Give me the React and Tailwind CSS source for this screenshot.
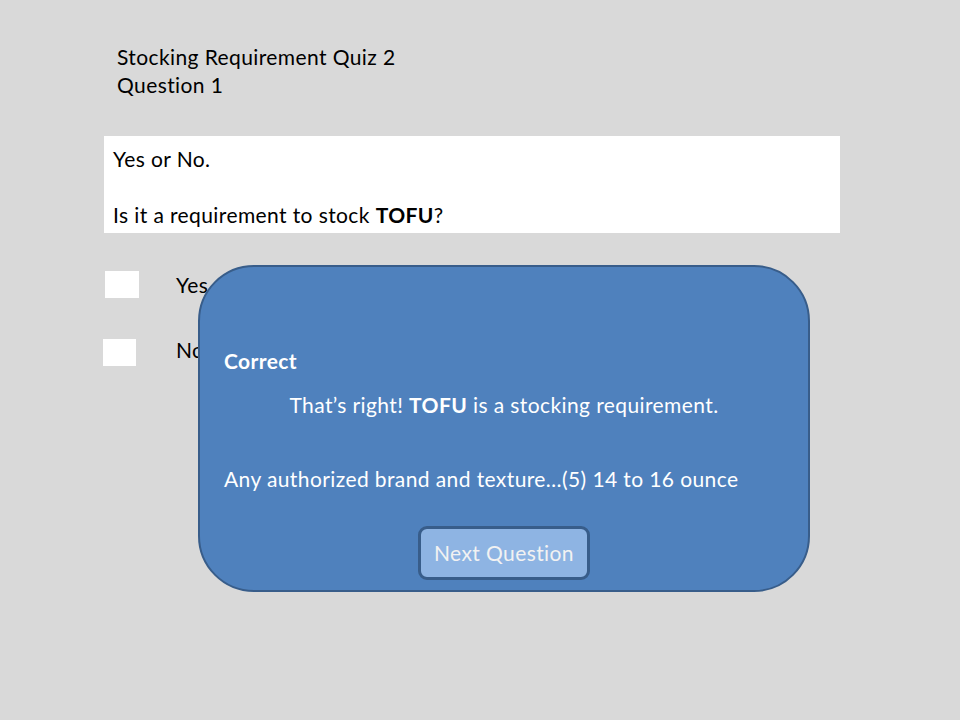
export default function App() {
  return (
    <div
      className="relative w-[960px] h-[720px] bg-[#d9d9d9] text-black overflow-hidden text-[21px] tracking-[0.4px]"
      style={{ fontFamily: "Lato, 'Open Sans', sans-serif" }}
    >
      <div className="flex flex-col pt-[43px] pl-[117px] leading-[28px]">
        <div>Stocking Requirement Quiz 2</div>
        <div>Question 1</div>
      </div>
      <div className="mt-[37px] ml-[104px] w-[736px] h-[97px] bg-white pl-[9px] pt-[9px] leading-[28px] flex flex-col gap-[28px]">
        <div>Yes or No.</div>
        <div>
          Is it a requirement to stock <b>TOFU</b>?
        </div>
      </div>
      <div className="flex flex-col gap-[41px] mt-[38px]">
        <div className="flex items-center h-[27px] gap-[37px] pl-[105px]">
          <div className="w-[34px] h-[27px] bg-white"></div>
          <span>Yes</span>
        </div>
        <div className="flex items-center h-[27px] gap-[40px] pl-[103px]">
          <div className="w-[33px] h-[27px] bg-white"></div>
          <span className="-mt-[5px]">No</span>
        </div>
      </div>

      <div className="absolute left-[198px] top-[265px] w-[612px] h-[327px] rounded-[56px] bg-[#4f81bd] border-2 border-[#385d8a] text-white flex flex-col pt-[80px] px-[24px] leading-[28px]">
        <div className="font-bold">Correct</div>
        <div className="mt-[16px] text-center">
          That’s right! <b>TOFU</b> is a stocking requirement.
        </div>
        <div className="mt-[46px]">Any authorized brand and texture…(5) 14 to 16 ounce</div>
        <div className="mt-[33px] self-center w-[172px] h-[54px] rounded-[9px] bg-[#8eb4e3] border-[3px] border-[#385d8a] flex items-center justify-center text-[#f2f2f2]">
          Next Question
        </div>
      </div>
    </div>
  );
}
